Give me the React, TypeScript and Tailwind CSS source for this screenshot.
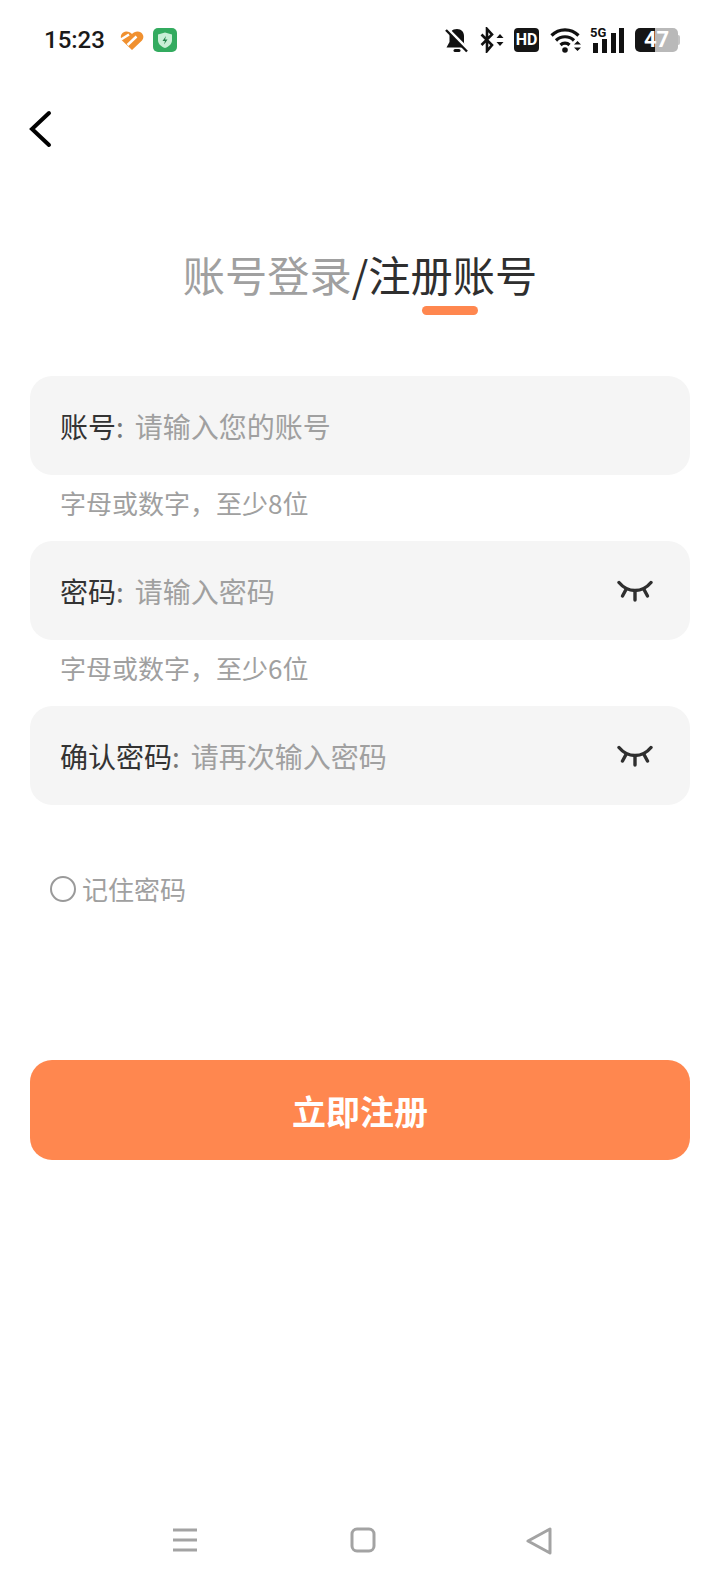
import React from "react";

const CJK = '"Noto Sans CJK SC", "Noto Sans", sans-serif';

function ClosedEye() {
  return (
    <svg width="36" height="22" viewBox="0 0 36 22" fill="none" stroke="#2f2f2f" strokeWidth="3.400" strokeLinecap="round">
      <path d="M2 2.500C7 8.500 12 10.500 18 10.500S29 8.500 34 2.500" />
      <path d="M18 11V20M9 9.500L5.500 16M27 9.500L30.500 16" />
    </svg>
  );
}

function Field({ label, placeholder, eye }: { label: string; placeholder: string; eye?: boolean }) {
  return (
    <div className="flex h-[99px] items-center rounded-[22px] bg-[#f5f5f5] pl-[30px] pr-[37px] text-[28px]">
      <span className="text-[#333333]">{label}</span>
      <span className="text-[#777777]">:</span>
      <span className="ml-[11px] text-[#a0a0a0]">{placeholder}</span>
      {eye && (
        <span className="ml-auto flex">
          <ClosedEye />
        </span>
      )}
    </div>
  );
}

function StatusBar() {
  return (
    <div className="flex h-[80px] items-center justify-between pl-[44px] pr-[40px]">
      <div className="flex items-center">
        <span className="text-[24px] font-medium text-[#1a1a1a]" style={{ fontFamily: "Roboto, sans-serif" }}>
          15:23
        </span>
        <svg className="ml-[15px]" width="24" height="22" viewBox="0 0 24 22">
          <path d="M12 21L2 11.500C-.5 8.500 1 3 6 2.500C8.500 2.300 10.500 3.500 12 5C14 2.500 18 1.500 21 3.500C24 6 24 9 22 11.500Z" fill="#f0902f" />
          <path d="M1 10.500L9 5.500M7.500 16L16.500 7.500" stroke="#fff" strokeWidth="2.500" fill="none" />
        </svg>
        <svg className="ml-[9px]" width="24" height="24" viewBox="0 0 24 24">
          <rect width="24" height="24" rx="5" fill="#33ab5f" />
          <path d="M12 4.500L19 6.500V12C19 16 16 18.500 12 20C8 18.500 5 16 5 12V6.500Z" fill="#c9efd6" />
          <path d="M13 8L9.500 13H12L11 16.500L14.500 11.500H12Z" fill="#24834a" />
        </svg>
      </div>
      <div className="flex items-center">
        <svg width="24" height="26" viewBox="0 0 24 26">
          <path d="M12 2C7 2 4.500 5.500 4.500 9.500V15L1.500 20.500H20.500L19 16V9C19 5 16.500 2 12 2Z" fill="#111" />
          <rect x="8.500" y="22" width="7" height="3" rx="1.500" fill="#111" />
          <path d="M1 1L24 24" stroke="#fff" strokeWidth="4" />
          <path d="M1 3L22 24.500" stroke="#111" strokeWidth="2.400" />
        </svg>
        <svg className="ml-[11px]" width="25" height="26" viewBox="0 0 25 26" fill="none">
          <path d="M1.500 7.500L12 18L7 24V2L12 7.500L1.500 18" stroke="#111" strokeWidth="2.600" />
          <path d="M16.500 11L20 7L23.500 11ZM16.500 15L20 19L23.500 15Z" fill="#111" />
        </svg>
        <div
          className="ml-[9px] flex h-[24px] w-[25px] items-center justify-center rounded-[4px] bg-[#151515] text-[16px] font-bold leading-none text-white"
          style={{ fontFamily: "Roboto, sans-serif" }}
        >
          HD
        </div>
        <svg className="ml-[11px]" width="32" height="26" viewBox="0 0 32 26" fill="none" stroke="#111" strokeWidth="3.200">
          <path d="M1.500 8.500C9 1 21 1 28.500 8.500M6 13.500C11 8.500 19 8.500 24 13.500M10.500 18C13 15.500 17 15.500 19.500 18" />
          <circle cx="15" cy="23" r="2.800" fill="#111" stroke="none" />
          <path d="M24 17.500H31L27.500 14ZM24 20.500H31L27.500 24Z" fill="#111" stroke="none" />
        </svg>
        <div className="relative ml-[8px] h-[26px] w-[34px]">
          <svg className="absolute bottom-0 left-0" width="34" height="26" viewBox="0 0 34 26" fill="#111">
            <rect x="3" y="16" width="5" height="10" />
            <rect x="12" y="12" width="5" height="14" />
            <rect x="21" y="6" width="5" height="20" />
            <rect x="29" y="1" width="5" height="25" />
          </svg>
          <span
            className="absolute left-0 top-[-1px] text-[13px] font-bold leading-none text-[#111]"
            style={{ fontFamily: "Roboto, sans-serif" }}
          >
            5G
          </span>
        </div>
        <div className="ml-[11px] flex items-center">
          <div
            className="flex h-[24px] w-[43px] items-center justify-center rounded-[5px] text-[22px] font-bold leading-none text-white"
            style={{
              fontFamily: "Roboto, sans-serif",
              background: "linear-gradient(90deg, #151515 0 47%, #b9b9b9 47% 100%)",
            }}
          >
            47
          </div>
          <div className="h-[10px] w-[2px] rounded-r-[2px] bg-[#c4c4c4]" />
        </div>
      </div>
    </div>
  );
}

function Hint({ children }: { children: React.ReactNode }) {
  return <div className="flex h-[66px] items-start pl-[30px] pt-[10px] text-[26px] leading-[36px] text-[#a0a0a0]">{children}</div>;
}

export default function App() {
  return (
    <div className="flex h-[1584px] w-[720px] flex-col bg-white" style={{ fontFamily: CJK }}>
      <StatusBar />

      <div className="flex h-[97px] items-center pl-[28px]">
        <svg width="24" height="38" viewBox="0 0 24 38" fill="none" stroke="#000" strokeWidth="4" strokeLinecap="round">
          <path d="M21 3L4 19L21 35" />
        </svg>
      </div>

      <div className="mt-[67px] flex flex-col items-center">
        <div className="text-[42.250px] leading-[60px]">
          <span className="text-[#a0a0a0]">账号登录</span>
          <span className="text-[#2f2f2f]">/注册账号</span>
        </div>
        <div className="ml-[180px] mt-[2px] h-[9px] w-[56px] rounded-full bg-[#ff874f]" />
      </div>

      <div className="mt-[61px] flex flex-col px-[30px]">
        <Field label="账号" placeholder="请输入您的账号" />
        <Hint>字母或数字，至少8位</Hint>
        <Field label="密码" placeholder="请输入密码" eye />
        <Hint>字母或数字，至少6位</Hint>
        <Field label="确认密码" placeholder="请再次输入密码" eye />
      </div>

      <div className="mt-[64px] flex items-center pl-[50px] text-[26px] text-[#a0a0a0]">
        <span className="h-[26px] w-[26px] rounded-full border-[2.500px] border-[#9a9a9a]" />
        <span className="ml-[6px]">记住密码</span>
      </div>

      <div className="mx-[30px] mt-[152px] flex h-[100px] items-center justify-center rounded-[22px] bg-[#ff874f] text-[34px] font-bold text-white">
        立即注册
      </div>

      <div className="mt-auto flex h-[84px] items-start pl-[172px] pt-[27px]">
        <svg width="26" height="26" viewBox="0 0 26 26" stroke="#a3a3a3" strokeWidth="3">
          <path d="M1 3H25M1 13H25M1 23H25" />
        </svg>
        <svg className="ml-[152px]" width="26" height="26" viewBox="0 0 26 26" fill="none" stroke="#a3a3a3" strokeWidth="3">
          <rect x="2" y="2" width="22" height="22" rx="5" />
        </svg>
        <svg className="ml-[150px]" width="26" height="28" viewBox="0 0 26 28" fill="none" stroke="#a3a3a3" strokeWidth="3" strokeLinejoin="round">
          <path d="M24 2V26L2 14Z" />
        </svg>
      </div>
    </div>
  );
}
